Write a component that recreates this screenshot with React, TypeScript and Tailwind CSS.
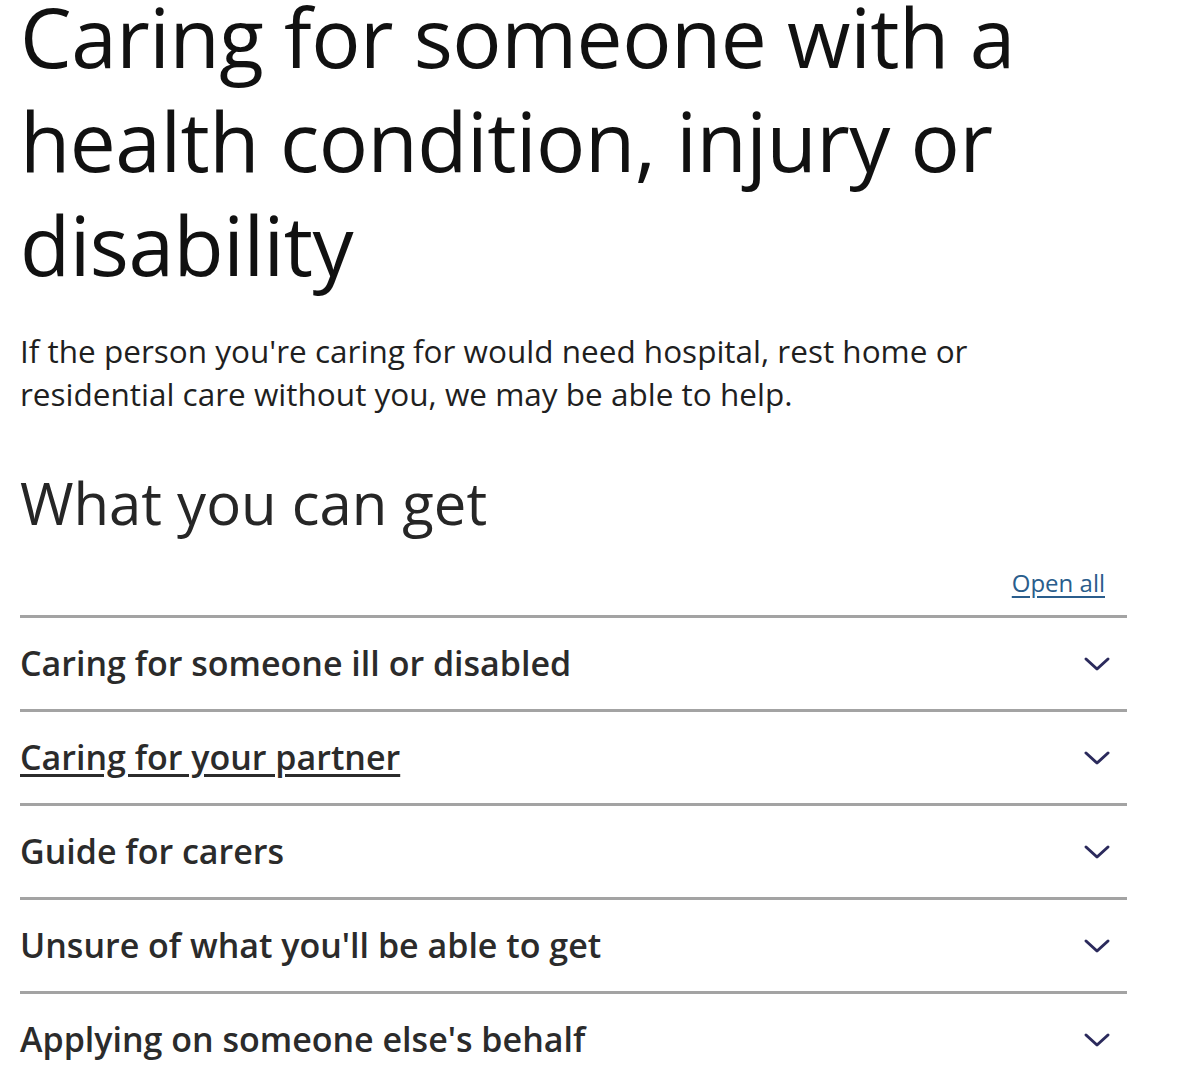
import React from 'react';

const items = [
  { title: 'Caring for someone ill or disabled', underline: false },
  { title: 'Caring for your partner', underline: true },
  { title: 'Guide for carers', underline: false },
  { title: "Unsure of what you'll be able to get", underline: false },
  { title: "Applying on someone else's behalf", underline: false },
];

const Chevron = () => (
  <svg width="28" height="18" viewBox="0 0 28 18" fill="none">
    <path d="M3 4l11 10L25 4" stroke="#2b2a5c" strokeWidth="3" strokeLinecap="round" strokeLinejoin="round" />
  </svg>
);

const App = () => {
  return (
    <div className="min-h-screen bg-white font-['Open_Sans',sans-serif] overflow-hidden">
      <div className="px-5 w-[1147px]">
        <h1 className="-mt-[16px] text-[82px] leading-[104px] text-[#111] tracking-[-0.5px]">
          Caring for someone with a health condition, injury or disability
        </h1>

        <p className="mt-[33px] text-[31.5px] leading-[43px] text-[#1f1f1f] w-[1000px]">
          If the person you're caring for would need hospital, rest home or residential care without you, we may be able to help.
        </p>

        <h2 className="mt-[53px] text-[58px] leading-[70px] text-[#262626]">What you can get</h2>

        <div className="flex justify-end pr-[22px] mt-[27px]">
          <a href="#" className="text-[24px] text-[#2a5d8c] underline underline-offset-4">Open all</a>
        </div>

        <div className="mt-[14px]">
          {items.map(item => (
            <div key={item.title} className="border-t-[3px] border-[#a3a3a3] h-[94px] flex items-center justify-between pr-[16px]">
              <span className={`text-[34px] font-semibold text-[#2b2b2b] ${item.underline ? 'underline underline-offset-4' : ''}`}>
                {item.title}
              </span>
              <Chevron />
            </div>
          ))}
        </div>
      </div>
    </div>
  );
};

export default App;
